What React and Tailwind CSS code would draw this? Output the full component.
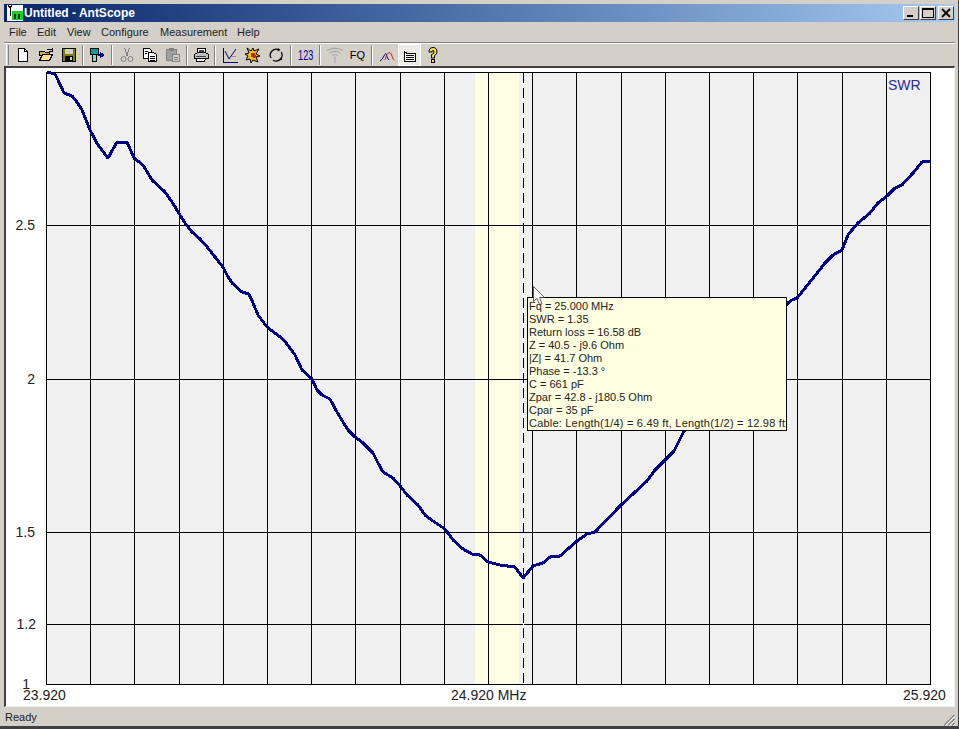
import React from 'react'

const FACE = 'bg-[#d4d0c8]'
const VLINES = [46, 90, 134, 179, 223, 267, 311, 355, 400, 444, 488, 532, 576, 621, 665, 709, 753, 797, 842, 886, 930]
const HLINES = [72, 225, 379, 532, 624, 684]
const YLABELS = [['2.5', 35, 230], ['2', 35, 384], ['1.5', 35, 537], ['1.2', 36, 629], ['1', 30, 689]]

// traced off the screenshot, screen coordinates
const SWR = [
  [47, 72], [55, 74], [58, 80], [64, 93], [72, 96], [77, 102], [82, 110], [90, 130], [98, 145], [108, 158],
  [117, 142], [127, 142], [134, 158], [143, 165], [152, 180], [165, 192], [172, 202], [180, 215], [185, 223],
  [192, 232], [200, 239], [208, 248], [215, 257], [223, 267], [227, 275], [232, 283], [242, 292], [249, 294],
  [253, 303], [258, 315], [267, 327], [283, 339], [290, 348], [295, 355], [302, 370], [312, 379], [317, 390],
  [322, 395], [330, 399], [337, 412], [343, 422], [348, 430], [355, 437], [362, 442], [373, 453], [378, 463],
  [383, 472], [393, 478], [401, 487], [407, 495], [418, 505], [425, 515], [430, 519], [445, 529], [453, 540],
  [463, 549], [472, 554], [480, 555], [488, 562], [500, 565], [515, 567], [523, 578], [533, 566], [543, 563],
  [550, 557], [560, 556], [577, 541], [587, 534], [595, 532], [620, 506], [647, 481], [655, 470], [665, 460],
  [674, 451], [684, 431], [788, 303], [792, 300], [797, 298], [810, 282], [825, 263], [833, 255], [842, 250],
  [848, 235], [852, 230], [858, 223], [870, 213], [878, 203], [887, 196], [895, 188], [902, 185], [913, 173],
  [922, 162], [930, 161],
]

const TIP = [
  'Fq = 25.000 MHz',
  'SWR = 1.35',
  'Return loss = 16.58 dB',
  'Z = 40.5 - j9.6 Ohm',
  '|Z| = 41.7 Ohm',
  'Phase = -13.3 °',
  'C = 661 pF',
  'Zpar = 42.8 - j180.5 Ohm',
  'Cpar = 35 pF',
]

const MENU = [['File', 'w-[28px]'], ['Edit', 'w-[30px]'], ['View', 'w-[34px]'], ['Configure', 'w-[59px]'], ['Measurement', 'w-[77px]'], ['Help', 'w-[40px]']]

function Ico({ children }) {
  return <svg viewBox="0 0 16 16" className="h-4 w-4" shapeRendering="crispEdges">{children}</svg>
}

function Tool({ children, pressed }) {
  return (
    <div className={`flex h-[22px] w-[23px] shrink-0 items-center justify-center ${pressed ? 'border border-white bg-[#ecebe6]' : ''}`}>
      {children}
    </div>
  )
}

function Sep({ w }) {
  return (
    <div className={`flex h-[22px] shrink-0 items-center justify-center ${w}`}>
      <div className="h-[20px] w-[2px] border-l border-r border-l-[#808080] border-r-white" />
    </div>
  )
}

function CapButton({ children }) {
  return (
    <div className={`flex h-[14px] w-[16px] items-center justify-center border border-white border-r-[#404040] border-b-[#404040] ${FACE}`}>
      {children}
    </div>
  )
}

function Toolbar() {
  return (
    <div className={`flex h-[22px] items-center pl-[2px] ${FACE}`}>
      <div className="h-[20px] w-[3px] border-l border-r border-l-white border-r-[#808080]" />
      <div className="w-[2px]" />
      <Tool><Ico><path d="M3.5 1.5h6l3 3v10h-9z" fill="#fff" stroke="#000" /><path d="M9.5 1.5v3h3" fill="none" stroke="#000" /></Ico></Tool>
      <Tool>
        <Ico>
          <path d="M1.5 4.5h5l1 1h4v3h-10z" fill="#c8b060" stroke="#000" />
          <path d="M1.5 13.5l3-6h10l-3 6z" fill="#ffe080" stroke="#000" />
          <path d="M9 3q2-2 5 0M14 1v3h-3" fill="none" stroke="#000" />
        </Ico>
      </Tool>
      <Tool>
        <Ico>
          <rect x="1.5" y="1.5" width="13" height="13" fill="#808000" stroke="#000" />
          <rect x="4" y="2" width="8" height="5" fill="#d4d0c8" />
          <rect x="4" y="9" width="8" height="5" fill="#000" />
          <rect x="9" y="10" width="2" height="3" fill="#d4d0c8" />
        </Ico>
      </Tool>
      <Sep w="w-[5px]" />
      <Tool>
        <Ico>
          <rect x="1.5" y="1.5" width="8" height="6" fill="#00a0a0" stroke="#000" />
          <rect x="3.5" y="7.5" width="4" height="7" fill="#9ad0d0" stroke="#000" />
          <path d="M11 5v6l4-3z" fill="#000080" stroke="#000080" />
          <rect x="9" y="7" width="3" height="2" fill="#000080" />
        </Ico>
      </Tool>
      <Sep w="w-[7px]" />
      <Tool>
        <Ico>
          <path d="M5.5 1l3 8M10.5 1l-3 8" stroke="#808080" fill="none" />
          <circle cx="4.5" cy="12" r="2.5" fill="none" stroke="#808080" shapeRendering="auto" />
          <circle cx="11.5" cy="12" r="2.5" fill="none" stroke="#808080" shapeRendering="auto" />
        </Ico>
      </Tool>
      <Tool>
        <Ico>
          <path d="M1.5 1.5h6l2 2v8h-8z" fill="#fff" stroke="#000" />
          <path d="M6.5 5.5h5l3 2v7h-8z" fill="#fff" stroke="#000" />
          <path d="M3 4h3M3 6h2M8 9h5M8 11h5M8 13h5" stroke="#000" fill="none" />
        </Ico>
      </Tool>
      <Tool>
        <Ico>
          <path d="M1.5 2.5h10v11h-10z" fill="#a0a0a0" stroke="#808080" />
          <rect x="4" y="1" width="5" height="3" fill="#808080" />
          <path d="M7.5 7.5h7v7h-7z" fill="#d4d0c8" stroke="#808080" />
          <path d="M9 10h4M9 12h4" stroke="#808080" />
        </Ico>
      </Tool>
      <Sep w="w-[5px]" />
      <Tool>
        <Ico>
          <path d="M4.5 1.5h8v5h-8z" fill="#fff" stroke="#000" />
          <path d="M1.5 7.5l3-2h8l3 2v4h-14z" fill="#c0c0c0" stroke="#000" />
          <path d="M3.5 11.5h9l-1 3h-8z" fill="#fff" stroke="#000" />
          <path d="M6 3h5M6 4h5M3 9h10" stroke="#404040" />
        </Ico>
      </Tool>
      <Sep w="w-[6px]" />
      <Tool>
        <Ico>
          <path d="M1.5 1v14h14" fill="none" stroke="#000080" />
          <path d="M3 4l4 8 7-10" fill="none" stroke="#000080" shapeRendering="auto" />
          <path d="M9 9h5" stroke="#c08080" />
        </Ico>
      </Tool>
      <Tool>
        <Ico>
          <path d="M2 1l4 3 2-3 1 3 5-2-3 5 4 2-4 1 2 5-5-2-2 3-1-4-4 1 2-4-3-2 4-1z" fill="#e8c020" stroke="#000" shapeRendering="auto" />
          <path d="M6 6l4 0 1 3-2 2-3-1z" fill="#d02000" />
        </Ico>
      </Tool>
      <Tool>
        <svg viewBox="0 0 16 16" className="h-4 w-4">
          <path d="M3 11A6 6 0 0 1 11 2.8M13.2 5A6 6 0 0 1 5 13.2" fill="none" stroke="#000" strokeWidth="1.2" />
          <path d="M10 1l2.5 2-3 1.5zM14.5 12.5l-3 1 .5-3z" fill="#000" />
        </svg>
      </Tool>
      <Sep w="w-[7px]" />
      <Tool><span className="scale-x-[0.65] text-[14px] text-[#0000a0]">123</span></Tool>
      <Sep w="w-[6px]" />
      <Tool>
        <svg viewBox="0 0 18 16" className="h-4 w-[18px]">
          <path d="M1 3.5Q9-1 17 3.5M3.5 6Q9 2.5 14.5 6M6 8.5Q9 6.5 12 8.5" fill="none" stroke="#a0a0a0" />
          <path d="M8.5 9.5h1V16h-1z" fill="#a0a0a0" />
        </svg>
      </Tool>
      <Tool><span className="text-[11px] text-black">FQ</span></Tool>
      <Sep w="w-[6px]" />
      <Tool>
        <svg viewBox="0 0 16 16" className="h-4 w-4">
          <path d="M1 14Q3 13 5 9T7.500 8 10 13" fill="none" stroke="#000080" />
          <path d="M6 13Q8 6 10 5.500T13 9 15.500 13" fill="none" stroke="#c03030" />
        </svg>
      </Tool>
      <Tool pressed>
        <Ico>
          <path d="M2.5 4.500l2 1.500h9v8h-11z" fill="#fff" stroke="#000" />
          <path d="M4 8.500h8M4 10.500h8M4 12.500h8" stroke="#000" />
        </Ico>
      </Tool>
      <Tool>
        <svg viewBox="0 0 16 18" className="h-[18px] w-4">
          <path d="M4 6Q4 1.5 8 1.5T12 6Q12 8.500 9.500 9.500V12H6.500V8.500Q9 8 9 6 9 4.500 8 4.500T7 6z" fill="#f4e040" stroke="#000" />
          <rect x="6.500" y="13.500" width="3" height="3" fill="#f4e040" stroke="#000" />
        </svg>
      </Tool>
    </div>
  )
}

function Plot() {
  return (
    <svg viewBox="6 68 948 637" className="block h-[637px] w-[948px]" style={{ fontFamily: '"Liberation Sans", Arial, sans-serif' }}>
      <rect x="46" y="72" width="884" height="612" fill="#f0f0f0" />
      <rect x="475" y="72" width="44" height="612" fill="#ffffe3" />
      <g stroke="#000" strokeWidth="1" shapeRendering="crispEdges">
        {VLINES.map((x) => <line key={x} x1={x + 0.5} x2={x + 0.5} y1="72" y2="685" />)}
        {HLINES.map((y) => <line key={y} x1="46" x2="931" y1={y + 0.5} y2={y + 0.5} />)}
      </g>
      <line x1="523.500" x2="523.500" y1="73" y2="684" stroke="#fff" shapeRendering="crispEdges" />
      <line x1="523.500" x2="523.500" y1="73" y2="688" stroke="#000" strokeDasharray="10 5" shapeRendering="crispEdges" />
      <polyline points={SWR.map((p) => p.join(',')).join(' ')} fill="none" stroke="#00008b" strokeWidth="3" strokeLinejoin="round" shapeRendering="crispEdges" />
      <text x="888" y="90" fontSize="14" fill="#2a2a96">SWR</text>
      <g fontSize="14" fill="#222">
        {YLABELS.map(([t, x, y]) => <text key={t} x={x} y={y} textAnchor="end">{t}</text>)}
        <text x="23" y="700">23.920</text>
        <text x="451" y="700">24.920 MHz</text>
        <text x="903" y="700">25.920</text>
      </g>
    </svg>
  )
}

export default function App() {
  return (
    <div className={`flex h-[729px] w-[959px] flex-col overflow-hidden border-r border-b-[3px] border-r-[#404040] border-b-[#404040] pt-[4px] pl-[4px] pr-[3px] font-['Liberation_Sans',Arial,sans-serif] text-[11px] text-[#111] ${FACE}`}>
      {/* title bar */}
      <div className="flex h-[18px] shrink-0 items-center bg-gradient-to-r from-[#0a246a] to-[#a6caf0] pr-[1px]">
        <svg viewBox="0 0 16 16" className="ml-[3px] h-4 w-4" shapeRendering="crispEdges">
          <rect width="16" height="16" fill="#fff" />
          <path d="M1 0l2 3 2-3M3 3v8" fill="none" stroke="#000" />
          <rect x="5" y="6" width="11" height="9" fill="#20d020" />
          <path d="M8 9v5M12 9v5" stroke="#003000" strokeWidth="2" />
        </svg>
        <span className="ml-[1px] text-[12px] font-bold text-white">Untitled - AntScope</span>
        <div className="ml-auto flex items-center">
          <CapButton><div className="mt-[6px] mr-[3px] h-[2px] w-[6px] bg-black" /></CapButton>
          <div className="w-[1px]" />
          <CapButton><div className="h-[10px] w-[12px] border border-t-2 border-black" /></CapButton>
          <div className="w-[2px]" />
          <CapButton>
            <svg viewBox="0 0 10 10" className="h-[10px] w-[10px]"><path d="M1 1l8 8M9 1l-8 8" stroke="#000" strokeWidth="1.800" /></svg>
          </CapButton>
        </div>
      </div>

      {/* menu */}
      <div className="flex h-[20px] shrink-0 items-center pl-[5px]">
        {MENU.map(([label, w]) => <span key={label} className={`${w} text-[#222]`}>{label}</span>)}
      </div>
      <div className="h-[2px] shrink-0 border-t border-b border-t-[#808080] border-b-white" />

      <Toolbar />

      {/* client */}
      <div className="relative flex-1 border-t-2 border-l-2 border-r border-b border-t-[#404040] border-l-[#404040] border-r-[#f0f0f0] border-b-[#f0f0f0] bg-white">
        <Plot />
        <div className="absolute top-[229px] left-[521px] flex h-[134px] w-[260px] flex-col border border-black bg-[#ffffe1] pt-[2px] pl-[1px] leading-[13px] whitespace-nowrap text-[#222]">
          {TIP.map((line) => <div key={line} className="h-[13px]">{line}</div>)}
          <div className="h-[13px] tracking-[0.2px]">Cable: Length(1/4) = 6.49 ft, Length(1/2) = 12.98 ft</div>
        </div>
        <svg viewBox="0 0 12 19" className="absolute top-[218px] left-[527px] h-[19px] w-[12px]">
          <path d="M.5.5v15l3.500-3 2.500 6 2.500-1-2.500-6h5z" fill="#fff" stroke="#333" strokeWidth="0.8" />
        </svg>
      </div>

      {/* status bar */}
      <div className="relative flex h-[19px] shrink-0 items-center pt-[1px] pl-[1px] text-[#222]">
        Ready
        <svg viewBox="0 0 12 12" className="absolute right-0 bottom-0 h-3 w-3">
          <path d="M11.500 1L1 11.500M11.500 5L5 11.500M11.500 9L9 11.500" stroke="#808080" strokeWidth="1.300" fill="none" />
          <path d="M11.500 2.500L2.500 11.500M11.500 6.500L6.500 11.500M11.500 10.500L10.500 11.500" stroke="#fff" fill="none" />
        </svg>
      </div>
    </div>
  )
}
